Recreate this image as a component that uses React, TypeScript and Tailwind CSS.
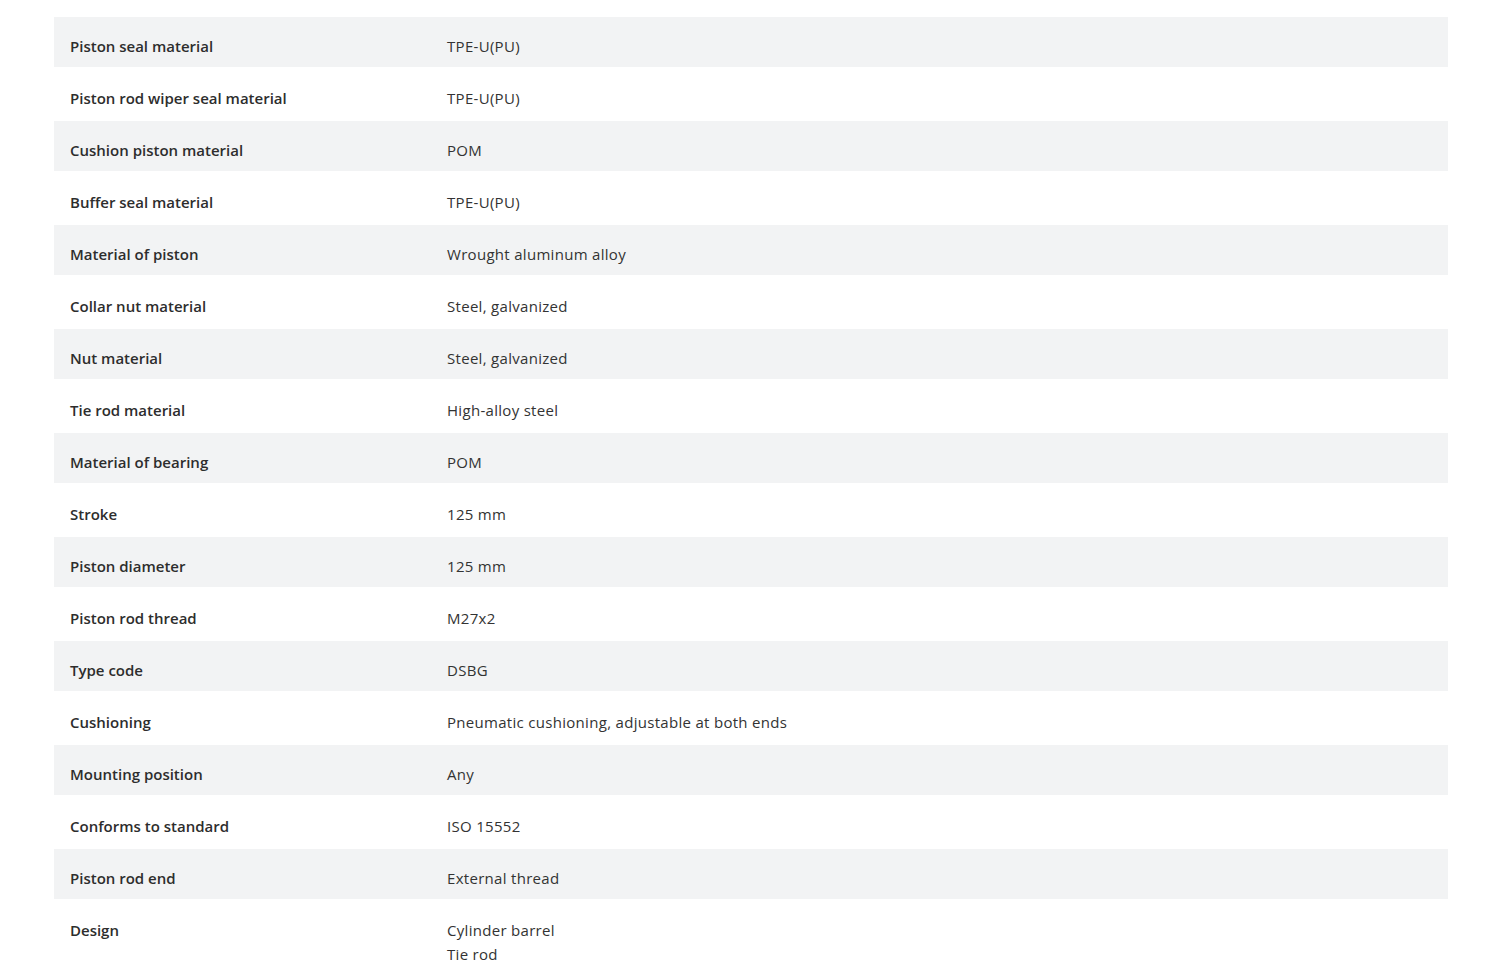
import React from 'react';

const rows: [string, string[]][] = [
  ['Piston seal material', ['TPE-U(PU)']],
  ['Piston rod wiper seal material', ['TPE-U(PU)']],
  ['Cushion piston material', ['POM']],
  ['Buffer seal material', ['TPE-U(PU)']],
  ['Material of piston', ['Wrought aluminum alloy']],
  ['Collar nut material', ['Steel, galvanized']],
  ['Nut material', ['Steel, galvanized']],
  ['Tie rod material', ['High-alloy steel']],
  ['Material of bearing', ['POM']],
  ['Stroke', ['125 mm']],
  ['Piston diameter', ['125 mm']],
  ['Piston rod thread', ['M27x2']],
  ['Type code', ['DSBG']],
  ['Cushioning', ['Pneumatic cushioning, adjustable at both ends']],
  ['Mounting position', ['Any']],
  ['Conforms to standard', ['ISO 15552']],
  ['Piston rod end', ['External thread']],
  ['Design', ['Cylinder barrel', 'Tie rod']],
];

const App: React.FC = () => {
  return (
    <div className="min-h-screen bg-white pt-[17px] pl-[54px] pr-[52px] font-['Open_Sans',sans-serif] text-[15px] text-[#333]">
      {rows.map(([label, values], i) => (
        <div
          key={label}
          className={`flex border-b-2 border-white pt-[17px] pb-[9px] leading-6 ${i % 2 === 0 ? 'bg-[#f2f3f4]' : 'bg-white'}`}
        >
          <div className="w-[393px] shrink-0 pl-4 font-semibold text-[#2d2d2d]">{label}</div>
          <div className="tracking-[0.3px]">
            {values.map((v) => (
              <div key={v} className="leading-[25px] first:leading-6">
                {v}
              </div>
            ))}
          </div>
        </div>
      ))}
    </div>
  );
};

export default App;
